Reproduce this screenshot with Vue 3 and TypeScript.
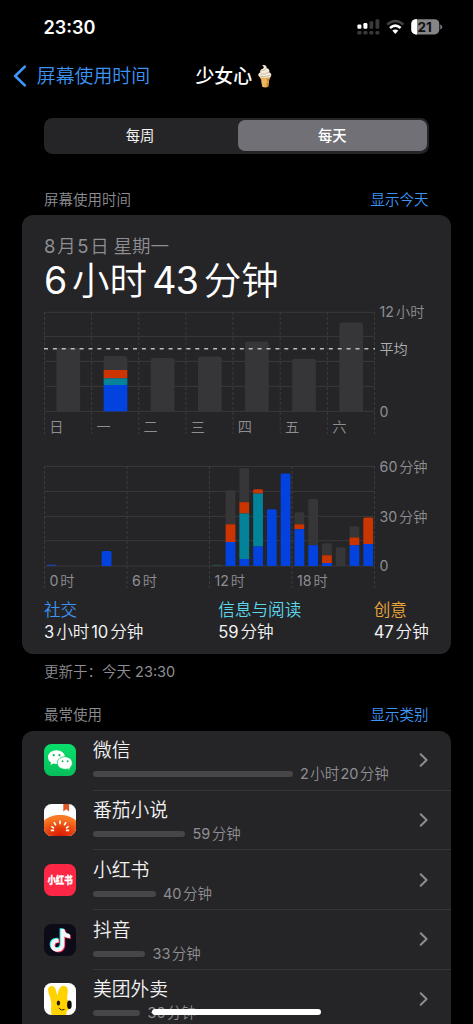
<script setup lang="ts">
interface Segment { color: string; top: number }
interface Bar { slot: number; segs: Segment[] }
interface AppUsage { name: string; time: string; width: number; icon: string }

const GREY = '#363638'
const RED = '#cb3501'
const TEAL = '#02839a'
const BLUE = '#0242df'

// Splits a duration into alternating numbers and units
const pieces = (text: string): string[] => text.split(/(\d+)/).filter(Boolean)
const isNum = (s: string): boolean => /\d/.test(s)

const stack = (slot: number, ...pairs: [string, number][]): Bar => ({
  slot,
  segs: pairs.map(([color, top]) => ({ color, top })),
})

// Each segment extends down to the next segment's top, or to the axis
const bottomOf = (bar: Bar, i: number, base: number): number =>
  i + 1 < bar.segs.length ? bar.segs[i + 1].top : base

const capped = (x: number, y: number, w: number, bottom: number, r: number): string => {
  const k = Math.min(r, bottom - y)
  return `M${x} ${bottom}V${y + k}Q${x} ${y} ${x + k} ${y}H${x + w - k}Q${x + w} ${y} ${x + w} ${y + k}V${bottom}Z`
}

const flat = (x: number, y: number, w: number, bottom: number): string => `M${x} ${y}H${x + w}V${bottom}H${x}Z`

const days = ['日', '一', '二', '三', '四', '五', '六']
const weekSlot = 47.14
const week: Bar[] = [
  stack(0, [GREY, 48]),
  stack(1, [GREY, 56], [RED, 70], [TEAL, 78.3], [BLUE, 85]),
  stack(2, [GREY, 58]),
  stack(3, [GREY, 56.5]),
  stack(4, [GREY, 41.6]),
  stack(5, [GREY, 58.8]),
  stack(6, [GREY, 22.5]),
]

const hourSlot = 13.77
const hours: Bar[] = [
  stack(0, ['#1b3f9a', 114.4]),
  stack(4, [BLUE, 101]),
  stack(12, ['#27474d', 114.8]),
  stack(13, [GREY, 40.3], [RED, 74.3], [BLUE, 92]),
  stack(14, [GREY, 18.2], [RED, 52.2], [TEAL, 63.5], [BLUE, 109]),
  stack(15, [RED, 39.3], [TEAL, 43.5], [BLUE, 96.5]),
  stack(16, [BLUE, 59.3]),
  stack(17, [BLUE, 23.5]),
  stack(18, [GREY, 62.3], [RED, 74.3], [BLUE, 79.2]),
  stack(19, [GREY, 49], [BLUE, 95.2]),
  stack(20, [GREY, 93.2], [RED, 105.3], [BLUE, 113]),
  stack(21, [GREY, 97.3]),
  stack(22, [GREY, 76.3], [RED, 87.5], [BLUE, 95.2]),
  stack(23, [RED, 67.6], [BLUE, 94]),
]

const legend = [
  { name: '社交', time: '3小时10分钟', cls: 'blue' },
  { name: '信息与阅读', time: '59分钟', cls: 'cyan' },
  { name: '创意', time: '47分钟', cls: 'gold' },
]

const apps: AppUsage[] = [
  { name: '微信', time: '2小时20分钟', width: 200, icon: 'wechat' },
  { name: '番茄小说', time: '59分钟', width: 92.5, icon: 'tomato' },
  { name: '小红书', time: '40分钟', width: 63, icon: 'red' },
  { name: '抖音', time: '33分钟', width: 52.5, icon: 'douyin' },
  { name: '美团外卖', time: '30分钟', width: 47.5, icon: 'meituan' },
]

const notePath = 'M16.6 5h3.8c.3 2.9 2.1 5 5.6 5.4v3.9c-2.1 0-4-.6-5.6-1.7v8c0 4.7-3.2 7.2-6.8 7.2-4 0-6.9-2.9-6.9-6.6 0-4.2 3.5-7.1 7.9-6.6v4c-2.3-.6-4 .7-4 2.6 0 1.6 1.3 2.7 2.9 2.7 1.8 0 3.1-1.2 3.1-3.2z'
</script>

<template>
  <main class="screen">
    <header class="status">
      <span class="clock">23:30</span>
      <svg class="indicators" width="86" height="17" viewBox="0 0 86 17">
        <g fill="#fff">
          <rect x="0.4" y="5.4" width="4" height="4.4" rx="1.2" />
          <rect x="6.4" y="4" width="4" height="5.8" rx="1.2" />
        </g>
        <g fill="#3a3a3b">
          <rect x="12.5" y="2.2" width="3.8" height="7.6" rx="1.2" />
          <rect x="18.5" y="0.2" width="3.8" height="9.6" rx="1.2" />
          <rect x="0.4" y="12" width="4" height="3.4" rx="1.2" />
          <rect x="6.4" y="12" width="4" height="3.4" rx="1.2" />
          <rect x="12.5" y="12" width="3.8" height="3.4" rx="1.2" />
          <rect x="18.5" y="12" width="3.8" height="3.4" rx="1.2" />
        </g>
        <path d="M30.2 5.6Q38.3 -1.6 46.4 5.6" fill="none" stroke="#434345" stroke-width="2.6" />
        <path d="M33 9Q38.3 4.4 43.6 9" fill="none" stroke="#fff" stroke-width="2.7" />
        <path d="M35.3 11.6Q38.3 9.2 41.3 11.6L38.3 14.9Z" fill="#fff" />
        <clipPath id="cell"><rect x="54.3" y="0.2" width="28" height="15.2" rx="4.6" /></clipPath>
        <g clip-path="url(#cell)">
          <rect x="54" y="0" width="29" height="16" fill="#858587" />
          <rect x="54" y="0" width="6" height="16" fill="#fff" />
        </g>
        <path d="M83.2 5.4Q85.4 6 85.4 7.9T83.2 10.4Z" fill="#737375" />
        <text x="60.4" y="12.7" class="charge">21</text>
      </svg>
    </header>

    <nav class="nav">
      <svg class="back" width="14" height="22" viewBox="0 0 14 22">
        <path d="M11.8 1.6L2.2 11L11.8 20.4" fill="none" stroke="#3c98ff" stroke-width="2.6" stroke-linecap="round" stroke-linejoin="round" />
      </svg>
      <span class="parent">屏幕使用时间</span>
      <h1 class="title">少女心</h1>
      <svg class="cone" width="16" height="24" viewBox="0 0 16 24">
        <path d="M2.2 12.5H14L12.3 15.5 11.2 22.8Q8.2 24 5.2 22.8L4 15.5Z" fill="#e5ab52" />
        <path d="M4 14.8H12.3L11.2 22.8H9.6L10 14.8Z" fill="#c98a34" />
        <path d="M5.8 15L6.5 22.6M8.2 15V23M4.4 18H11.8" stroke="#f5cb7d" stroke-width=".6" />
        <path d="M5.1 1.2C7.5.3 10.1 1.6 9.5 4.1C12.2 4.7 13 6.7 12.1 8.2C14.5 9 15 11.5 13.5 12.7C10.5 14.2 5 14.1 2.4 12.8C.6 11.5 1.2 9.2 3.3 8.6C2.6 6.3 4 5.3 5.8 4.7C7.2 4 7.2 2.6 5.1 1.2Z" fill="#f3ead8" />
        <path d="M9.3 4.3Q8.2 6.5 4.4 6.8M12 8.2Q9 10.4 3.7 10.2M13.7 11.1Q9.5 13.2 3.2 12.3" fill="none" stroke="#bcb19d" stroke-width=".8" />
      </svg>
    </nav>

    <div class="segmented">
      <span class="tab">每周</span>
      <span class="tab active">每天</span>
    </div>

    <div class="heading first">
      <span>屏幕使用时间</span>
      <a class="link">显示今天</a>
    </div>

    <section class="card summary">
      <p class="date"><span class="num">8</span>月<span class="num mid">5</span>日<span class="weekday">星期一</span></p>
      <p class="total"><span v-for="(s, i) in pieces('6小时43分钟')" :key="i" :class="{ num: isNum(s) }">{{ s }}</span></p>

      <svg class="chart week" width="406" height="136" viewBox="44 300 406 136">
        <path d="M44.5 312.3H374.5M44.5 336.4H374.5M44.5 361.4H374.5M44.5 386.4H374.5M44.5 411.4H374.5" class="grid" />
        <path v-for="n in 8" :key="n" :d="`M${44.5 + (n - 1) * weekSlot} 312V434`" class="rule" />
        <g v-for="bar in week" :key="bar.slot">
          <path
            v-for="(seg, i) in bar.segs"
            :key="i"
            :fill="seg.color"
            :d="i === 0
              ? capped(56.5 + bar.slot * weekSlot, 300 + seg.top, 23.7, 300 + bottomOf(bar, i, 111.4), 2.4)
              : flat(56.5 + bar.slot * weekSlot, 300 + seg.top, 23.7, 300 + bottomOf(bar, i, 111.4))"
          />
        </g>
        <path d="M44 348.7H375" class="average" />
        <text v-for="(d, i) in days" :key="d" :x="49.3 + i * weekSlot" y="432" class="label han">{{ d }}</text>
        <text x="379.6" y="317.4" class="label">12<tspan dx="2" class="han">小时</tspan></text>
        <text x="379.4" y="354" class="label han bright">平均</text>
        <text x="379.6" y="416.6" class="label">0</text>
      </svg>

      <svg class="chart day" width="406" height="136" viewBox="44 454 406 136">
        <path d="M44.5 466.4H374.5M44.5 491.4H374.5M44.5 516.4H374.5M44.5 540.7H374.5M44.5 566H374.5" class="grid" />
        <path v-for="n in 5" :key="n" :d="`M${44.5 + (n - 1) * 82.5} 466V588`" class="rule" />
        <g v-for="bar in hours" :key="bar.slot">
          <path
            v-for="(seg, i) in bar.segs"
            :key="i"
            :fill="seg.color"
            :d="i === 0
              ? capped(46.6 + bar.slot * hourSlot, 450 + seg.top, 9.8, 450 + bottomOf(bar, i, 116), 1.5)
              : flat(46.6 + bar.slot * hourSlot, 450 + seg.top, 9.8, 450 + bottomOf(bar, i, 116))"
          />
        </g>
        <text v-for="n in 4" :key="n" :x="49.4 + (n - 1) * 82.5" y="586.3" class="label">{{ (n - 1) * 6 }}<tspan dx="2" class="han">时</tspan></text>
        <text x="379.6" y="471.6" class="label">60<tspan dx="1.8" class="han">分钟</tspan></text>
        <text x="379.6" y="521.6" class="label">30<tspan dx="1.8" class="han">分钟</tspan></text>
        <text x="379.6" y="571.2" class="label">0</text>
      </svg>

      <div class="legend">
        <div v-for="item in legend" :key="item.name" class="entry">
          <p :class="item.cls">{{ item.name }}</p>
          <p><span v-for="(s, i) in pieces(item.time)" :key="i" :class="{ num: isNum(s) }">{{ s }}</span></p>
        </div>
      </div>
    </section>

    <p class="updated">更新于：今天 <span class="stamp">23:30</span></p>

    <div class="heading second">
      <span>最常使用</span>
      <a class="link">显示类别</a>
    </div>

    <section class="card apps">
      <article v-for="app in apps" :key="app.icon" class="app">
        <svg class="icon" width="32" height="32" viewBox="0 0 32 32">
          <template v-if="app.icon === 'wechat'">
            <defs>
              <linearGradient id="wx" x2="0" y2="1"><stop stop-color="#08df6c" /><stop offset="1" stop-color="#07bd5b" /></linearGradient>
            </defs>
            <rect width="32" height="32" fill="url(#wx)" />
            <path d="M12.5 6.2C7.7 6.2 4 9.3 4 13.2C4 15.4 5.1 17.3 7.1 18.6L6.4 21.1L9.4 19.6C10.4 19.9 11.5 20.1 12.8 20.1C17.4 20.1 21 17 21 13.1C21 9.3 17.3 6.2 12.5 6.2Z" fill="#fff" />
            <path d="M21 12.7C16.7 12.7 13.3 15.5 13.3 19.1S16.7 25.3 21 25.3C22 25.3 22.9 25.1 23.8 24.9L26.3 26.2L25.7 24C27.3 22.8 28.3 21.1 28.3 19.1C28.3 15.5 25.2 12.7 21 12.7Z" fill="#fff" stroke="#09cc62" stroke-width=".8" />
            <g fill="#09b957">
              <circle cx="9.7" cy="11.2" r="1.1" /><circle cx="15.4" cy="11.2" r="1.1" />
              <circle cx="18.5" cy="17.2" r=".95" /><circle cx="23.6" cy="17.2" r=".95" />
            </g>
          </template>
          <template v-else-if="app.icon === 'tomato'">
            <defs>
              <radialGradient id="tom" cx=".5" cy="1" r=".85"><stop stop-color="#d91905" /><stop offset=".5" stop-color="#e8400f" /><stop offset="1" stop-color="#f97824" /></radialGradient>
            </defs>
            <rect width="32" height="32" fill="#fff" />
            <path d="M19.3 0H25.1V7.4L22.2 5.2L19.3 7.4Z" fill="#df5725" />
            <path d="M0 16.8C7.5 9.2 24.5 9.2 32 16.8V32H0Z" fill="url(#tom)" />
            <path d="M16 17V19.6M10.3 18.6L11.5 20.8M21.7 18.6L20.5 20.8M7.9 22.7L9.4 23.9M24.1 22.7L22.6 23.9M7.5 26.4H9.4M22.6 26.4H24.5" fill="none" stroke="#fff7e8" stroke-width="1.7" stroke-linecap="round" />
          </template>
          <template v-else-if="app.icon === 'red'">
            <rect width="32" height="32" fill="#fb2744" />
            <text x="3.4" y="19.7" class="mark" textLength="25.4" lengthAdjust="spacingAndGlyphs">小红书</text>
          </template>
          <template v-else-if="app.icon === 'douyin'">
            <rect width="32" height="32" fill="#0c0b18" />
            <path :d="notePath" fill="#25f0e8" transform="translate(-1 -.8)" />
            <path :d="notePath" fill="#fb2b56" transform="translate(.9 .6)" />
            <path :d="notePath" fill="#f5f3f4" />
          </template>
          <template v-else>
            <rect width="32" height="32" fill="#fff" />
            <path d="M7.8 32C6.2 28 7.9 22.5 6.9 17.5C5.9 12.5 3.4 9 4.3 5.4C5.2 2.4 9.1 2.1 10.8 4.7C12.3 7 12.4 10 13.2 12.4C14 9 14.7 5.7 16.8 3.7C19.2 1.6 22.7 2.8 23.5 5.5C24.5 9 22.8 13 23.1 16.1L25.8 20.2C27.3 23.8 25.5 26.8 22.7 28L22.5 32Z" fill="#ffd200" />
            <ellipse cx="14.4" cy="20.1" rx="1.7" ry="2.5" fill="#1c1a14" />
            <ellipse cx="25.4" cy="21.7" rx="2.3" ry="4.2" fill="#0c0c0c" />
            <path d="M15 25.4Q17.1 28.3 20.2 26.6" fill="none" stroke="#2e270d" stroke-width="1" stroke-linecap="round" />
          </template>
        </svg>
        <div class="body">
          <div class="info">
            <h2 class="name">{{ app.name }}</h2>
            <div class="usage">
              <span class="meter" :style="{ width: app.width + 'px' }"></span>
              <span class="time"><span v-for="(s, i) in pieces(app.time)" :key="i" :class="{ num: isNum(s) }">{{ s }}</span></span>
            </div>
          </div>
          <svg class="chevron" width="10" height="16" viewBox="0 0 10 16">
            <path d="M1.7 2.2L7.6 8L1.7 13.8" fill="none" stroke="#8d8d92" stroke-width="2" stroke-linecap="round" stroke-linejoin="round" />
          </svg>
        </div>
      </article>
    </section>

    <div class="home"></div>
  </main>
</template>

<style>
html, body { background: #000; }
</style>

<style scoped>
.screen {
  position: relative;
  box-sizing: border-box;
  width: 473px;
  height: 1024px;
  overflow: hidden;
  background: #000;
  color: #f2f2f3;
  font-family: Inter, "Noto Sans CJK SC", sans-serif;
  font-size: 14.5px;
  font-weight: 350;
}
p, h1, h2 { margin: 0; font-weight: 350; }
.num { margin: 0 0.1em 0 0.08em; font-weight: 400; }
.num:first-child { margin-left: 0; }
.stamp { font-weight: 400; }

.status {
  display: flex;
  justify-content: space-between;
  height: 54px;
  padding: 0 30px 0 43.5px;
}
.clock { font-size: 18.1px; font-weight: 600; line-height: 54px; color: #fff; }
.indicators { margin-top: 19px; }
.charge { font: 700 13.5px Inter, sans-serif; fill: #111; }

.nav { display: flex; align-items: center; height: 44px; padding-left: 13px; }
.parent { padding-top: 2px; margin-left: 9.8px; font-size: 18.9px; line-height: 44px; color: #3c94f5; }
.title { padding-top: 2px; margin-left: 45.3px; font-size: 18.9px; font-weight: 500; line-height: 44px; color: #fff; }
.cone { margin-left: 4.5px; }

.segmented {
  display: flex;
  box-sizing: border-box;
  width: 384.5px;
  height: 35.5px;
  margin: 20px 0 0 44px;
  padding: 2.3px 2px;
  border-radius: 8.5px;
  background: #252527;
}
.tab {
  flex: 1;
  padding-right: 4px;
  border-radius: 7px;
  font-size: 14.3px;
  font-weight: 400;
  line-height: 32px;
  text-align: center;
}
.active { flex: 0 0 188.5px; box-sizing: border-box; padding-right: 0; background: #707076; font-weight: 500; color: #fff; }

.heading {
  display: flex;
  justify-content: space-between;
  padding: 0 44.5px 0 44px;
  line-height: 24px;
  color: #8e8e93;
}
.first { margin-top: 34.2px; }
.second { margin-top: 19px; }
.link { color: #3d94f2; }

.card { width: 428.5px; margin-left: 22.3px; background: #252527; }
.summary {
  box-sizing: border-box;
  height: 438.7px;
  margin-top: 3.3px;
  padding: 18.5px 22px 0 21.7px;
  border-radius: 11.5px;
}
.date { font-size: 18.5px; line-height: 27px; color: #8e8e93; white-space: nowrap; }
.weekday { margin-left: 4.5px; }
.total { height: 39.5px; font-size: 37.5px; line-height: 42px; color: #fff; white-space: nowrap; }
.total .num { margin: 0 0.14em 0 0.14em; letter-spacing: -0.015em; }
.total .num:first-child { margin-left: 0; }
.chart { display: block; overflow: visible; }
.day { margin-top: 18px; }
.grid { fill: none; stroke: #39393b; stroke-width: 1; }
.rule { fill: none; stroke: #3c3c3f; stroke-width: 1; stroke-dasharray: 3 2; }
.average { fill: none; stroke: #bcbcbe; stroke-width: 1.6; stroke-dasharray: 4 4.9; }
.label { font: 400 14.2px Inter, "Noto Sans CJK SC", sans-serif; fill: #8e8e93; }
.han { font-weight: 350; }
.bright { fill: #b0b0b4; }

.legend {
  display: flex;
  justify-content: space-between;
  margin-top: 9px;
  font-size: 16.6px;
  line-height: 22.2px;
  white-space: nowrap;
}
.entry:first-child { margin-right: 2.5px; }
.legend .num { margin: 0 0.13em 0 0.11em; letter-spacing: -0.01em; }
.legend .num:first-child { margin-left: 0; }
.blue { color: #3c94f5; }
.cyan { color: #5cd8ec; }
.gold { color: #eda53c; }

.updated { margin: 6.2px 0 0 44px; line-height: 24px; color: #8e8e93; }

.apps { height: 320px; margin-top: 4px; border-radius: 11.5px 11.5px 0 0; }
.app { display: flex; height: 59.75px; padding-left: 21.9px; }
.icon { flex: none; margin-top: 13.5px; border-radius: 7.5px; }
.mark { font: 900 10px "Noto Sans CJK SC", sans-serif; fill: #fff; stroke: #fff; stroke-width: .3px; }
.body {
  display: flex;
  flex: 1;
  box-sizing: border-box;
  align-items: center;
  justify-content: space-between;
  margin-left: 16.8px;
  padding-right: 21.5px;
  border-bottom: 1px solid #363638;
}
.info { align-self: flex-start; }
.name { margin-top: 6.5px; font-size: 18.8px; line-height: 27px; }
.usage { display: flex; align-items: center; height: 20px; margin-top: 0; }
.meter { height: 6px; border-radius: 3px; background: #464648; }
.time { margin-left: 7px; line-height: 20px; color: #8e8e93; white-space: nowrap; }

.home {
  position: absolute;
  left: 152px;
  top: 1009.3px;
  width: 169px;
  height: 6px;
  border-radius: 3px;
  background: #fff;
}
</style>
